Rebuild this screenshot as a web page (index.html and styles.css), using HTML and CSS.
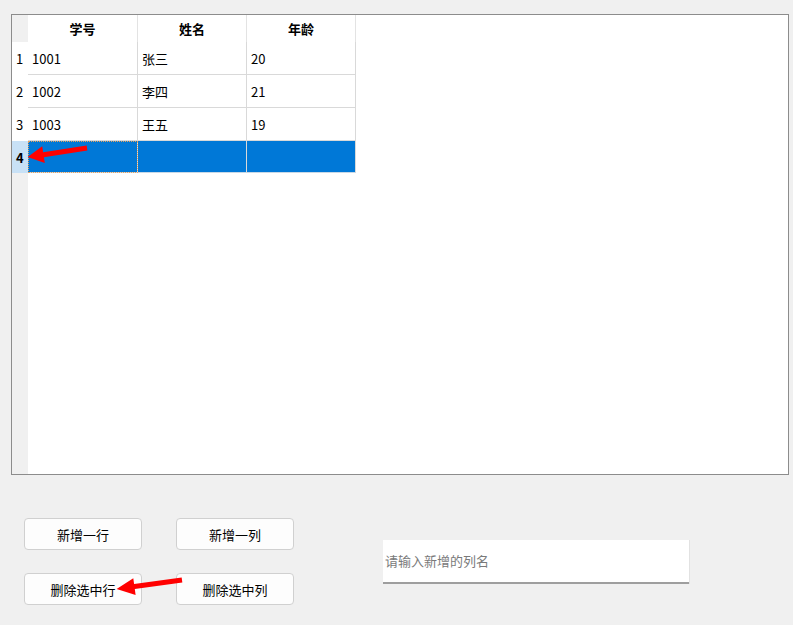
FILE: index.html
```html
<!DOCTYPE html>
<html lang="zh">
<head>
<meta charset="utf-8">
<link rel="stylesheet" href="styles.css">
</head>
<body>
<div class="page">
  <div class="frame">
    <table class="grid">
      <colgroup>
        <col class="c-vh"><col class="c-1"><col class="c-2"><col class="c-3">
      </colgroup>
      <thead>
        <tr>
          <th class="corner"></th>
          <th class="hh">学号</th>
          <th class="hh">姓名</th>
          <th class="hh">年龄</th>
        </tr>
      </thead>
      <tbody>
        <tr><th class="vh">1</th><td>1001</td><td>张三</td><td>20</td></tr>
        <tr><th class="vh">2</th><td>1002</td><td>李四</td><td>21</td></tr>
        <tr><th class="vh">3</th><td>1003</td><td>王五</td><td>19</td></tr>
        <tr class="sel"><th class="vh">4</th><td class="focus"></td><td></td><td></td></tr>
      </tbody>
    </table>
  </div>
  <div class="controls">
    <div class="buttons">
      <button class="btn">新增一行</button>
      <button class="btn">新增一列</button>
      <button class="btn">删除选中行</button>
      <button class="btn">删除选中列</button>
    </div>
    <input class="colname" type="text" placeholder="请输入新增的列名">
  </div>
</div>
<svg class="overlay" width="793" height="625" viewBox="0 0 793 625">
  <polygon fill="#ff0000" points="0,-2.5 44,-2.5 44,-8.5 60,0 44,8.5 44,2.5 0,2.5" transform="translate(87 148) rotate(171.3)"/>
  <polygon fill="#ff0000" points="0,-2.5 48,-2.5 48,-8.5 66,0 48,8.5 48,2.5 0,2.5" transform="translate(182 580) rotate(172.1)"/>
</svg>
</body>
</html>
```
FILE: styles.css
```css
html, body {
  margin: 0;
  padding: 0;
  background: #f0f0f0;
  font-family: "Noto Sans CJK SC", "Noto Sans", sans-serif;
  font-size: 13px;
  color: #000;
}
.page {
  padding: 14px 0 0 11px;
  width: 778px;
}
.frame {
  width: 776px;
  height: 459px;
  border: 1px solid #8c8c8c;
  background: linear-gradient(to right, #f0f0f0 16px, #ffffff 16px);
  overflow: hidden;
}
.grid {
  border-collapse: separate;
  border-spacing: 0;
  table-layout: fixed;
  width: 344px;
}
.c-vh { width: 16px; }
.c-1 { width: 110px; }
.c-2 { width: 109px; }
.c-3 { width: 109px; }
.grid th, .grid td {
  box-sizing: border-box;
  padding: 0;
  white-space: nowrap;
  overflow: hidden;
}
.corner {
  background: #f0f0f0;
  height: 27px;
}
.hh {
  background: #fff;
  height: 27px;
  font-weight: bold;
  text-align: center;
  border-right: 1px solid #e3e3e3;
}
.vh {
  background: #fff;
  font-weight: normal;
  text-align: left;
  padding-left: 4px !important;
  height: 33px;
}
.grid td {
  height: 33px;
  padding-left: 4px;
  border-right: 1px solid #d9d9d9;
  border-bottom: 1px solid #d9d9d9;
}
.sel .vh {
  background: #c8e1f6;
  font-weight: bold;
  height: 32px;
}
.sel td {
  background: #0078d7;
  height: 32px;
  border-bottom-color: #c8d8e6;
}
.sel td.focus {
  outline: 1px dotted #e8a05a;
  outline-offset: -1px;
}
.controls {
  display: flex;
  align-items: center;
  margin-top: 43px;
  margin-left: 13px;
}
.buttons {
  display: grid;
  grid-template-columns: 118px 118px;
  grid-auto-rows: 32px;
  column-gap: 34px;
  row-gap: 23px;
}
.btn {
  box-sizing: border-box;
  height: 32px;
  background: #fdfdfd;
  border: 1px solid #d0d0d0;
  border-radius: 4px;
  font-family: "Noto Sans CJK SC", "Noto Sans", sans-serif;
  font-size: 13px;
  color: #000;
  padding: 0;
}
.colname {
  box-sizing: border-box;
  margin-left: 89px;
  width: 306px;
  height: 44px;
  border: none;
  border-bottom: 2px solid #9e9e9e;
  box-shadow: 1px 0 0 #e2e2e2;
  background: #fff;
  padding: 0 0 0 2px;
  font-family: "Noto Sans CJK SC", "Noto Sans", sans-serif;
  font-size: 13px;
  outline: none;
}
.colname::placeholder {
  color: #7a7a7a;
}
.overlay {
  position: absolute;
  left: 0;
  top: 0;
  pointer-events: none;
}
```
